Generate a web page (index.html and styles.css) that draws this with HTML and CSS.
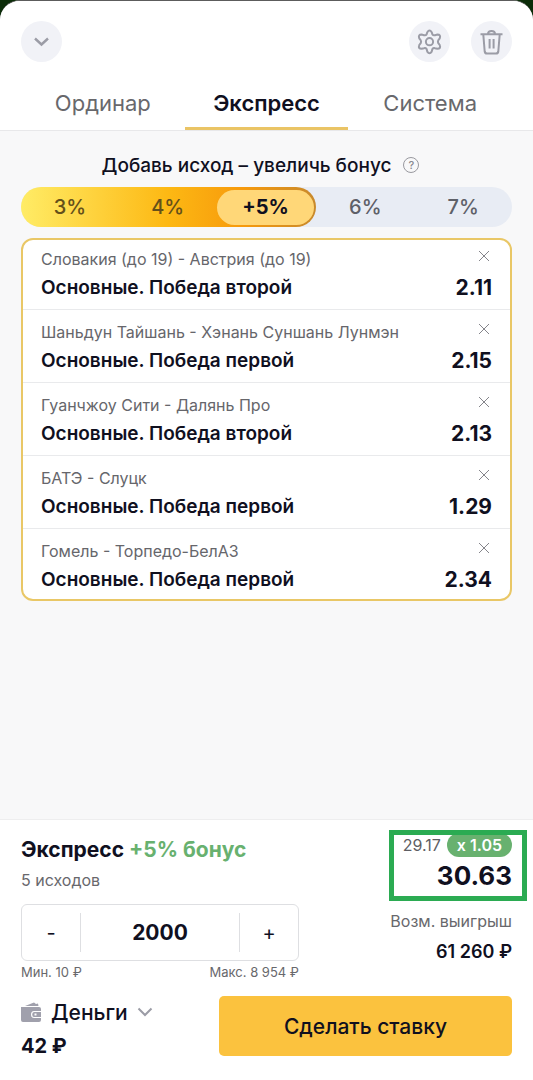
FILE: index.html
```html
<!doctype html>
<html lang="ru">
<head>
    <meta charset="UTF-8">
    <meta name="viewport" content="width=device-width, initial-scale=1.0">
    <title>Купон</title>
    <link rel="stylesheet" href="styles.css">
</head>
<body>
<div class="coupon">
    <header class="header">
        <div class="toolbar">
            <button class="round-btn" type="button" aria-label="Свернуть">
                <svg width="41" height="41" viewBox="0 0 41 41"><path d="M14 17.500l6.500 6 6.500-6" stroke-width="2.400"/></svg>
            </button>
            <div class="actions">
                <button class="round-btn" type="button" aria-label="Настройки">
                    <svg width="41" height="41" viewBox="0 0 41 41">
                        <path d="M18.300 11.200Q20.500 7.800 22.700 11.200L23.400 13.400Q24.300 14.700 26 14.200L28.300 13.600Q32.200 13.600 30.700 17.400L29.300 19.200Q28.500 20.700 29.300 22.200L30.700 24Q32.200 27.800 28.300 27.800L26 27.200Q24.300 26.700 23.400 28L22.700 30.600Q20.500 34 18.300 30.600L17.600 28Q16.700 26.700 15 27.200L12.700 27.800Q8.800 27.800 10.300 24L11.700 22.200Q12.500 20.700 11.700 19.200L10.300 17.400Q8.800 13.600 12.700 13.600L15 14.200Q16.700 14.700 17.600 13.400Z"/>
                        <circle cx="20.500" cy="20.700" r="3.600"/>
                    </svg>
                </button>
                <button class="round-btn" type="button" aria-label="Очистить">
                    <svg width="41" height="41" viewBox="0 0 41 41">
                        <path d="M9.500 13.200H31.500M17 13C17 9 24 9 24 13M12.300 13.500L13.700 30.500Q14 32.500 16 32.500H25Q27 32.500 27.300 30.500L28.700 13.500M18.600 18V27.500M22.600 18V27.500"/>
                    </svg>
                </button>
            </div>
        </div>
        <div class="tabs" role="tablist">
            <button class="tab" type="button" role="tab">Ординар</button>
            <button class="tab active" type="button" role="tab" aria-selected="true">Экспресс</button>
            <button class="tab" type="button" role="tab">Система</button>
        </div>
    </header>

    <main class="content">
        <div class="hint">
            <span>Добавь исход – увеличь бонус</span>
            <button class="help" type="button" aria-label="Подсказка">?</button>
        </div>
        <div class="scale">
            <div class="passed">
                <span>3%</span>
                <span>4%</span>
                <span class="current">+5%</span>
            </div>
            <span>6%</span>
            <span>7%</span>
        </div>

        <ul class="bets">
            <li class="bet">
                <div class="match">Словакия (до 19) - Австрия (до 19)</div>
                <button class="remove" type="button" aria-label="Удалить"><svg width="12" height="12" viewBox="0 0 12 12"><path d="M1 1l10 10M11 1L1 11"/></svg></button>
                <div class="outcome">Основные. Победа второй</div>
                <div class="odd">2.11</div>
            </li>
            <li class="bet">
                <div class="match">Шаньдун Тайшань - Хэнань Суншань Лунмэн</div>
                <button class="remove" type="button" aria-label="Удалить"><svg width="12" height="12" viewBox="0 0 12 12"><path d="M1 1l10 10M11 1L1 11"/></svg></button>
                <div class="outcome">Основные. Победа первой</div>
                <div class="odd">2.15</div>
            </li>
            <li class="bet">
                <div class="match">Гуанчжоу Сити - Далянь Про</div>
                <button class="remove" type="button" aria-label="Удалить"><svg width="12" height="12" viewBox="0 0 12 12"><path d="M1 1l10 10M11 1L1 11"/></svg></button>
                <div class="outcome">Основные. Победа второй</div>
                <div class="odd">2.13</div>
            </li>
            <li class="bet">
                <div class="match">БАТЭ - Слуцк</div>
                <button class="remove" type="button" aria-label="Удалить"><svg width="12" height="12" viewBox="0 0 12 12"><path d="M1 1l10 10M11 1L1 11"/></svg></button>
                <div class="outcome">Основные. Победа первой</div>
                <div class="odd">1.29</div>
            </li>
            <li class="bet">
                <div class="match">Гомель - Торпедо-БелАЗ</div>
                <button class="remove" type="button" aria-label="Удалить"><svg width="12" height="12" viewBox="0 0 12 12"><path d="M1 1l10 10M11 1L1 11"/></svg></button>
                <div class="outcome">Основные. Победа первой</div>
                <div class="odd">2.34</div>
            </li>
        </ul>
    </main>

    <footer class="footer">
        <div class="summary">
            <div class="stake">
                <div class="kind">Экспресс <span class="bonus">+5% бонус</span></div>
                <div class="count">5 исходов</div>
                <div class="stepper">
                    <button class="step" type="button" aria-label="Меньше">-</button>
                    <input class="amount" type="text" value="2000" aria-label="Сумма ставки">
                    <button class="step" type="button" aria-label="Больше">+</button>
                </div>
                <div class="limits">
                    <span>Мин. 10 ₽</span>
                    <span>Макс. 8 954 ₽</span>
                </div>
            </div>
            <div class="result">
                <div class="total">
                    <div class="base">29.17 <span class="factor">x 1.05</span></div>
                    <div class="final">30.63</div>
                </div>
                <div class="win-label">Возм. выигрыш</div>
                <div class="win">61 260 ₽</div>
            </div>
        </div>
        <div class="pay">
            <div class="wallet">
                <div class="source">
                    <svg class="purse" width="21" height="20" viewBox="0 0 21 20">
                        <path d="M0 5H18Q20 5 20 7V9H13Q10 9 10 12.500T13 16H20V18Q20 20 18 20H2Q0 20 0 18Z"/>
                        <path d="M4 4L13 0.500L15 2L17 1.500L17.500 4Z"/>
                        <path d="M13 10H20V15H13Q11.200 15 11.200 12.500T13 10ZM13.500 11.500V13.500H15.500V11.500Z" fill-rule="evenodd"/>
                    </svg>
                    <select class="account" aria-label="Счёт">
                        <option>Деньги</option>
                    </select>
                    <svg class="arrow" width="16" height="10" viewBox="0 0 16 10"><path d="M1.500 1.500L8 8l6.500-6.500"/></svg>
                </div>
                <div class="balance">42 ₽</div>
            </div>
            <button class="submit" type="button">Сделать ставку</button>
        </div>
    </footer>
</div>
</body>
</html>
```
FILE: styles.css
```css
* {
    margin: 0;
    padding: 0;
    box-sizing: border-box;
}

body {
    background-color: #0b2c08;
    color: #10101f;
    font-family: Inter, "Noto Sans", sans-serif;
}

button, input, select {
    font: inherit;
    color: inherit;
    background: none;
    border: 0;
}

button {
    cursor: pointer;
}

svg {
    display: block;
    fill: none;
    stroke: #9b9ca6;
    stroke-width: 2;
}

.coupon {
    display: flex;
    flex-direction: column;
    min-height: 100vh;
    background-color: #f8f8f9;
    border-top: 1px solid #5c5c5c;
    border-radius: 20px 20px 0 0;
    overflow: hidden;
}

.header {
    padding: 20px 21px 0;
    background-color: #fff;
    border-bottom: 1px solid #e8e8ea;
}

.toolbar, .actions {
    display: flex;
    justify-content: space-between;
    gap: 21px;
}

.round-btn {
    width: 41px;
    height: 41px;
    border-radius: 50%;
    background-color: #f1f2f7;
}

.tabs {
    display: flex;
    margin-top: 14px;
}

.tab {
    flex: 1;
    height: 54px;
    padding-top: 2px;
    border-bottom: 3px solid transparent;
    font-size: 22px;
    color: #68686c;
}

.tab.active {
    border-color: #eac465;
    color: #10101f;
    font-weight: 600;
}

.content {
    flex: 1;
    padding: 22px 21px;
}

.hint {
    display: flex;
    align-items: center;
    justify-content: center;
    gap: 12px;
    height: 24px;
    padding-right: 12px;
    font-size: 19px;
    font-weight: 500;
}

.help {
    width: 16px;
    height: 16px;
    border: 1px solid #99999f;
    border-radius: 50%;
    font-size: 11px;
    line-height: 14px;
    color: #88888e;
}

.scale {
    display: flex;
    align-items: center;
    height: 40px;
    margin-top: 10px;
    border-radius: 20px;
    background-color: #e8ecf4;
    font-size: 20px;
    font-weight: 500;
    text-align: center;
    color: #5e6068;
}

.scale span {
    flex: 1;
}

.passed {
    flex: 3;
    display: flex;
    align-items: center;
    height: 40px;
    padding: 0 2px 0 0;
    border-radius: 20px;
    background: linear-gradient(90deg, #ffec66, #fdb813 50%, #f79a0c 75%, #c8892c);
    color: #64501a;
}

.scale .current {
    height: 35px;
    border-radius: 18px;
    background-color: #ffd778;
    font-weight: 700;
    line-height: 35px;
    color: #10101f;
}

.bets {
    margin-top: 11px;
    border: 2px solid #e9c766;
    border-radius: 12px;
    background-color: #fff;
    list-style: none;
}

.bet {
    display: grid;
    grid-template-columns: 1fr auto;
    align-items: center;
    padding: 9px 18px 6px;
    border-bottom: 1px solid #e9eaec;
}

.bet:first-child {
    padding-top: 6px;
}

.bet:last-child {
    border-bottom: 0;
    padding-bottom: 4px;
}

.match {
    font-size: 16px;
    line-height: 27px;
    color: #66666b;
}

.remove {
    justify-self: end;
    align-self: start;
    padding: 4px 2px;
}

.remove svg {
    stroke-width: 1;
    stroke: #85858b;
}

.outcome {
    font-size: 19px;
    font-weight: 600;
    line-height: 30px;
}

.odd {
    font-size: 21px;
    font-weight: 700;
    line-height: 30px;
    text-align: right;
}

.footer {
    padding: 15px 21px 16px;
    background-color: #fff;
    border-top: 1px solid #eeeeef;
}

.summary {
    display: flex;
    justify-content: space-between;
    gap: 20px;
}

.stake {
    flex: 0 1 278px;
    min-width: 0;
}

.kind {
    font-size: 21px;
    font-weight: 700;
    line-height: 30px;
    white-space: nowrap;
}

.bonus {
    color: #68b16f;
}

.count {
    font-size: 16px;
    line-height: 30px;
    color: #68686c;
}

.stepper {
    display: flex;
    height: 57px;
    margin-top: 9px;
    padding: 8px 0;
    border: 1px solid #dedfe2;
    border-radius: 6px;
}

.step {
    flex: 0 0 58px;
    font-size: 20px;
}

.amount {
    flex: 1;
    min-width: 0;
    border: solid #dedfe2;
    border-width: 0 1px;
    font-size: 21px;
    font-weight: 700;
    text-align: center;
}

.limits {
    display: flex;
    justify-content: space-between;
    font-size: 13px;
    line-height: 22px;
    color: #68686c;
}

.result {
    text-align: right;
    white-space: nowrap;
}

.total {
    position: relative;
    padding-bottom: 14px;
}

/* green frame over the total */
.total::after {
    content: "";
    position: absolute;
    top: -5px;
    right: -15px;
    box-sizing: border-box;
    width: 138px;
    height: 71px;
    border: 5px solid #2bab52;
}

.base {
    display: flex;
    align-items: center;
    justify-content: flex-end;
    gap: 6px;
    height: 20px;
    font-size: 16px;
    color: #5e5e63;
}

.factor {
    padding: 0 10px;
    border-radius: 12px;
    background-color: #68b16f;
    font-weight: 600;
    line-height: 24px;
    color: #fff;
}

.final {
    font-size: 26px;
    font-weight: 700;
    line-height: 42px;
}

.win-label {
    font-size: 16px;
    line-height: 20px;
    color: #68686c;
}

.win {
    margin-top: 6px;
    font-size: 18px;
    font-weight: 600;
    line-height: 30px;
}

.pay {
    display: flex;
    gap: 20px;
    margin-top: 13px;
}

.wallet {
    flex: 1;
}

.source {
    display: flex;
    align-items: center;
    gap: 9px;
    height: 32px;
}

.purse {
    fill: #a0a0ac;
    stroke: none;
}

.account {
    appearance: none;
    font-size: 21px;
    font-weight: 500;
}

.balance {
    font-size: 20px;
    font-weight: 700;
    line-height: 36px;
}

.submit {
    flex: 0 1 293px;
    height: 60px;
    border-radius: 5px;
    background-color: #fbc23e;
    font-size: 21px;
    font-weight: 500;
}
```
